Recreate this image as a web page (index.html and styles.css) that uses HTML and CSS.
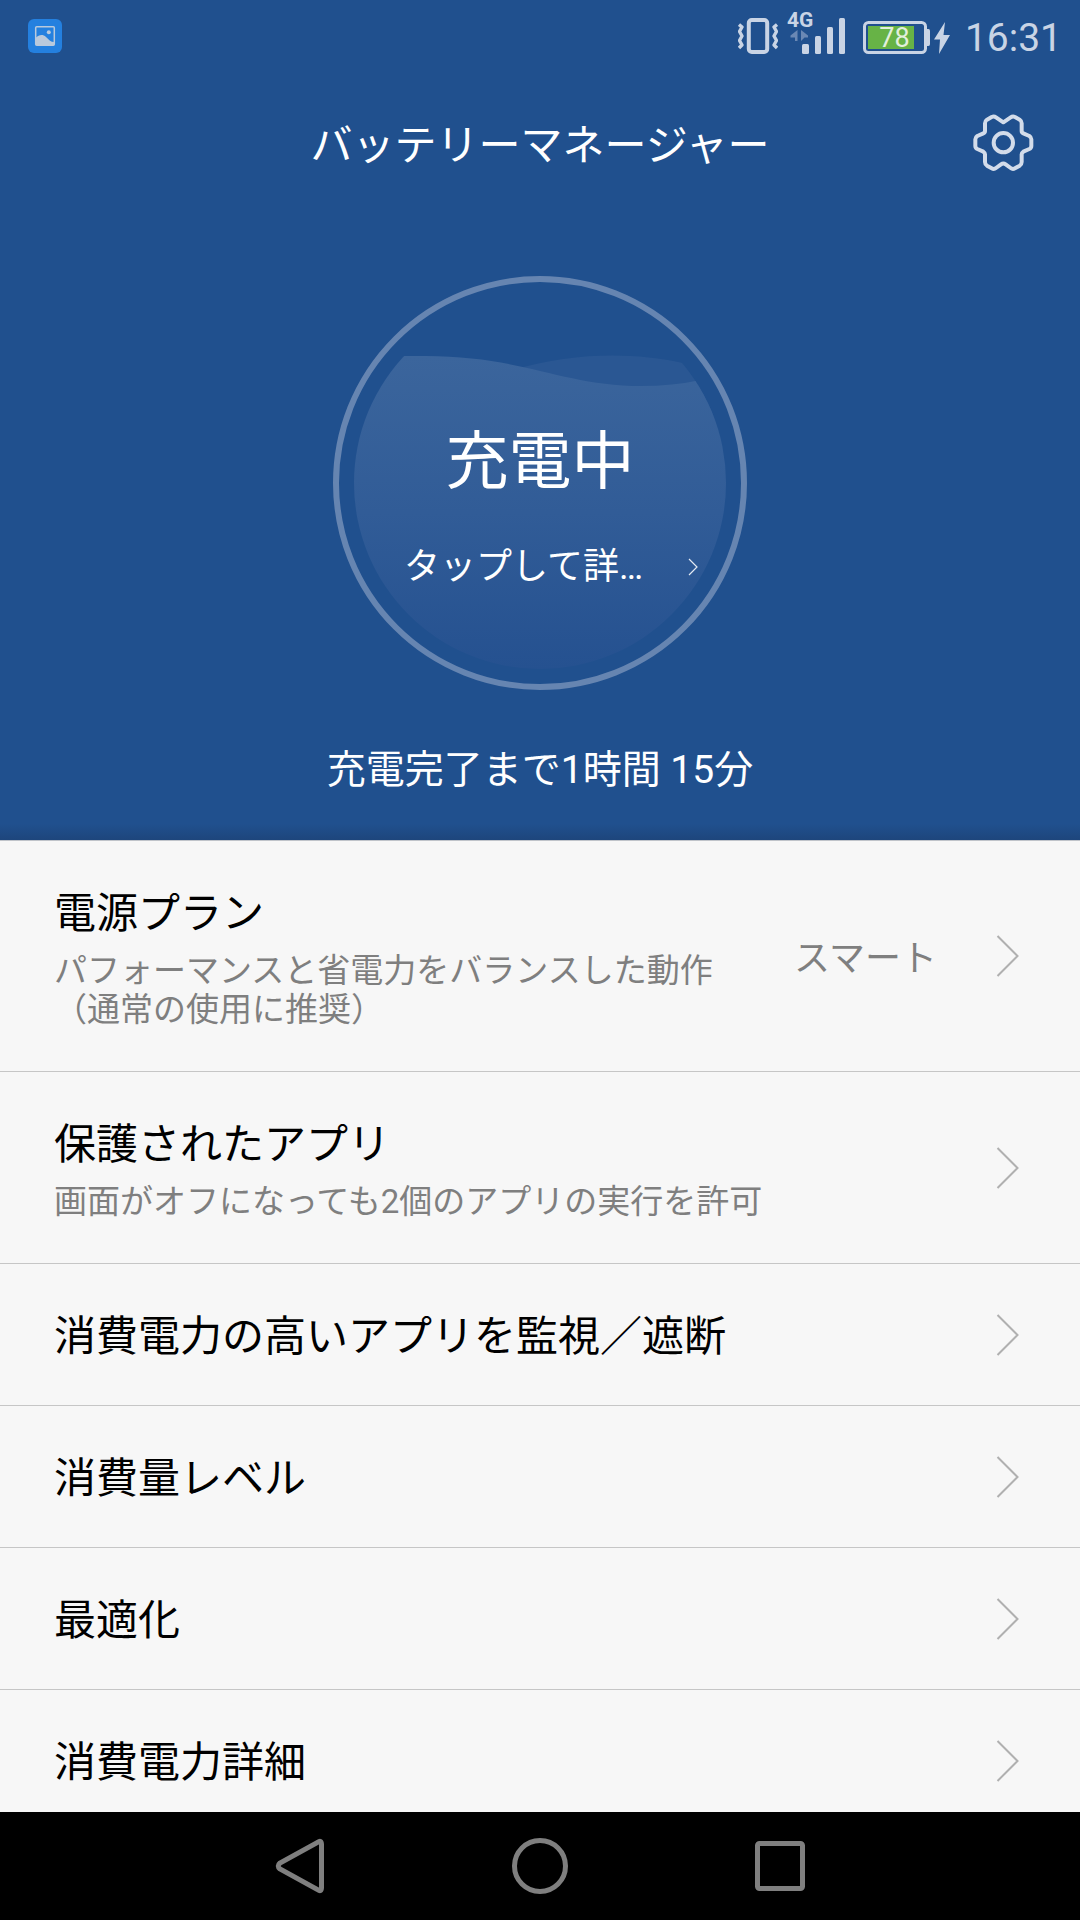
FILE: index.html
```html
<!DOCTYPE html>
<html lang="ja">
<head>
    <meta charset="UTF-8">
    <meta name="viewport" content="width=device-width, initial-scale=1.0">
    <title>バッテリーマネージャー</title>
    <link rel="stylesheet" href="styles.css">
</head>
<body>
    <div class="screen">
        <div class="hero">
            <div class="status-bar">
                <svg class="status-picture" width="34" height="34" viewBox="0 0 34 34">
                    <rect width="34" height="34" rx="6" fill="#2480df"/>
                    <rect x="7.7" y="7.7" width="18.6" height="18.6" rx="1" fill="none" stroke="#b9c9dc" stroke-width="1.5"/>
                    <circle cx="20.8" cy="13.3" r="2" fill="#b9c9dc"/>
                    <path d="M8 18.5C11 15.5 15 15 18 18C21 21 23 23 26 23V26H8Z" fill="#b9c9dc"/>
                </svg>
                <div class="status-icons">
                    <svg class="vibrate" width="40" height="36" viewBox="0 0 40 36">
                        <g fill="none" stroke="#c9d4e5">
                            <rect x="10.8" y="2" width="18.4" height="32" rx="3" stroke-width="4"/>
                            <path d="M1 6.5L4 9L1.5 13.5L4 18L1.5 22.5L4 27L1 30" stroke-width="3.4" stroke-linejoin="round"/>
                            <path d="M39 6.5L36 9L38.5 13.5L36 18L38.5 22.5L36 27L39 30" stroke-width="3.4" stroke-linejoin="round"/>
                        </g>
                    </svg>
                    <svg class="signal" width="58" height="54" viewBox="0 0 58 54">
                        <text x="0" y="27" class="network">4G</text>
                        <path d="M3.500 35.500L10.500 30V41H8V37.500H3.500ZM21 35.500L14 30V41L17.500 37.500H21Z" fill="#6a88b4"/>
                        <g fill="#c9d4e5">
                            <rect x="15" y="44" width="7" height="10" rx="1.5"/>
                            <rect x="28" y="36" width="6" height="18" rx="1.5"/>
                            <rect x="40" y="27" width="6" height="27" rx="1.5"/>
                            <rect x="52" y="18" width="6" height="36" rx="1.5"/>
                        </g>
                    </svg>
                    <svg class="battery" width="87" height="34" viewBox="0 0 87 34">
                        <rect x="1.5" y="1.5" width="61" height="30" rx="4" fill="none" stroke="#c9d4e5" stroke-width="3"/>
                        <path d="M64 8h1.5q1.5 0 1.5 2v13q0 2-1.5 2H64Z" fill="#c9d4e5"/>
                        <rect x="5" y="5" width="46" height="23" fill="#67b346"/>
                        <text x="31.5" y="25.7" class="percent">78</text>
                        <path d="M82 1L71 18.5H77L76 33L87 14H80.500Z" fill="#c9d4e5"/>
                    </svg>
                    <span class="clock">16:31</span>
                </div>
            </div>

            <div class="title-bar">
                <h1>バッテリーマネージャー</h1>
                <svg class="settings" width="61" height="58" viewBox="98 71 183 174">
                    <g fill="none" stroke="#d3dcea" stroke-width="12">
                        <path stroke-linejoin="round" d="M189 96L167 81Q161 77 154 80L140 88Q134 92 134 99V122Q134 127 129 129L111 137Q105 141 105 147V167Q105 173 111 176L129 184Q134 187 134 192V215Q134 222 140 226L154 234Q161 238 167 233L182 222Q189 217 196 222L211 233Q217 238 224 234L238 226Q244 222 244 215V192Q244 187 249 184L267 176Q273 173 273 167V147Q273 141 267 137L249 129Q244 127 244 122V99Q244 92 238 88L224 80Q217 77 211 81Z"/>
                        <circle cx="189" cy="157" r="29"/>
                    </g>
                </svg>
            </div>

            <div class="gauge">
                <svg class="gauge-art" width="414" height="414" viewBox="0 0 414 414">
                    <defs>
                        <linearGradient id="water" x1="0" y1="80" x2="0" y2="393" gradientUnits="userSpaceOnUse">
                            <stop offset="0" stop-color="#3b659c"/>
                            <stop offset="0.5" stop-color="#315c97"/>
                            <stop offset="1" stop-color="#255190"/>
                        </linearGradient>
                        <clipPath id="bowl">
                            <circle cx="207" cy="207" r="186"/>
                        </clipPath>
                    </defs>
                    <g clip-path="url(#bowl)">
                        <path d="M180 94C240 76 300 76 350 87L400 97V140H180Z" fill="#2a5793"/>
                        <path d="M0 80H92C190 80 230 110 308 110Q340 110 368 104L414 92V414H0Z" fill="url(#water)"/>
                    </g>
                    <circle cx="207" cy="207" r="204" fill="none" stroke="#6685b1" stroke-width="6"/>
                </svg>
                <div class="gauge-state">充電中</div>
                <div class="gauge-detail">
                    <span>タップして詳…</span>
                    <svg width="10" height="18" viewBox="0 0 10 18">
                        <path d="M1 1L9 9L1 17" fill="none" stroke="#e4eaf3" stroke-width="1.200"/>
                    </svg>
                </div>
            </div>

            <p class="remaining">充電完了まで1時間 15分</p>
        </div>

        <div class="list">
            <div class="row row-tall">
                <div class="row-text">
                    <h2>電源プラン</h2>
                    <p>パフォーマンスと省電力をバランスした動作<br>（通常の使用に推奨）</p>
                </div>
                <span class="row-value">スマート</span>
                <svg class="chevron" width="23" height="42" viewBox="0 0 23 42"><path d="M1.500 1L21.500 21L1.500 41"/></svg>
            </div>
            <div class="row row-medium">
                <div class="row-text">
                    <h2>保護されたアプリ</h2>
                    <p>画面がオフになっても2個のアプリの実行を許可</p>
                </div>
                <svg class="chevron" width="23" height="42" viewBox="0 0 23 42"><path d="M1.500 1L21.500 21L1.500 41"/></svg>
            </div>
            <div class="row">
                <div class="row-text"><h2>消費電力の高いアプリを監視／遮断</h2></div>
                <svg class="chevron" width="23" height="42" viewBox="0 0 23 42"><path d="M1.500 1L21.500 21L1.500 41"/></svg>
            </div>
            <div class="row">
                <div class="row-text"><h2>消費量レベル</h2></div>
                <svg class="chevron" width="23" height="42" viewBox="0 0 23 42"><path d="M1.500 1L21.500 21L1.500 41"/></svg>
            </div>
            <div class="row">
                <div class="row-text"><h2>最適化</h2></div>
                <svg class="chevron" width="23" height="42" viewBox="0 0 23 42"><path d="M1.500 1L21.500 21L1.500 41"/></svg>
            </div>
            <div class="row">
                <div class="row-text"><h2>消費電力詳細</h2></div>
                <svg class="chevron" width="23" height="42" viewBox="0 0 23 42"><path d="M1.500 1L21.500 21L1.500 41"/></svg>
            </div>
        </div>

        <div class="nav-bar">
            <svg width="60" height="60" viewBox="0 0 60 60">
                <path d="M51.500 8.500Q51.500 3.500 47.500 6.500L10 27Q6.500 30 10 33L47.500 53.500Q51.500 56.500 51.500 51.500Z"/>
            </svg>
            <svg width="60" height="60" viewBox="0 0 60 60">
                <circle cx="30" cy="30" r="25.500"/>
            </svg>
            <svg width="60" height="60" viewBox="0 0 60 60">
                <rect x="7.500" y="7.500" width="45" height="45" rx="2"/>
            </svg>
        </div>
    </div>
</body>
</html>
```

FILE: styles.css
```css
* {
    margin: 0;
    padding: 0;
    box-sizing: border-box;
}

body {
    font-family: Roboto, 'Noto Sans CJK JP', sans-serif;
    background: #000;
}

svg {
    display: block;
    flex-shrink: 0;
}

.screen {
    width: 1080px;
    height: 1920px;
    display: flex;
    flex-direction: column;
    overflow: hidden;
}

.hero {
    height: 841px;
    flex-shrink: 0;
    background: linear-gradient(to bottom, transparent 824px, rgba(25, 50, 90, 0.35) 840px), #20508e;
    border-bottom: 1px solid #c0c4ca;
    color: white;
}

/* Status bar */
.status-bar {
    height: 75px;
    display: flex;
    justify-content: space-between;
    padding: 0 18px 0 28px;
}

.status-picture {
    margin-top: 19px;
}

.status-icons {
    display: flex;
}

.vibrate {
    margin: 18px 9px 0 0;
}

.signal {
    margin-right: 18px;
}

.battery {
    margin: 21px 15px 0 0;
}

.network {
    font-size: 21px;
    font-weight: 700;
    fill: #c9d4e5;
}

.percent {
    font-size: 27px;
    text-anchor: middle;
    fill: #e3efdc;
}

.clock {
    font-size: 39px;
    line-height: 46px;
    margin-top: 15px;
    color: #c9d4e5;
}

/* Title */
.title-bar {
    height: 136px;
    display: grid;
    grid-template-columns: 61px 1fr 61px;
    align-items: center;
    padding: 0 46px;
}

.title-bar h1 {
    grid-column: 2;
    padding-top: 6px;
    font-size: 42px;
    font-weight: 400;
    line-height: 60px;
    text-align: center;
}

/* Charge gauge */
.gauge {
    position: relative;
    width: 414px;
    height: 414px;
    margin: 65px auto 0;
    padding-top: 141px;
}

.gauge-art {
    position: absolute;
    top: 0;
    left: 0;
}

.gauge-state {
    position: relative;
    font-size: 63px;
    line-height: 90px;
    text-align: center;
}

.gauge-detail {
    position: relative;
    display: flex;
    align-items: center;
    justify-content: space-between;
    margin-top: 34px;
    padding: 0 49px 0 71px;
    font-size: 36px;
    line-height: 52px;
}

.remaining {
    margin-top: 52px;
    font-size: 39px;
    line-height: 56px;
    text-align: center;
}

/* Settings list */
.list {
    flex: 1;
    overflow: hidden;
    background: #f7f7f7;
}

.row {
    height: 142px;
    display: flex;
    align-items: center;
    padding: 0 61px 0 54px;
    border-bottom: 1px solid #c6c6c6;
}

.row-tall {
    height: 231px;
}

.row-medium {
    height: 192px;
}

.row-text {
    flex: 1;
    padding-top: 5px;
}

.row h2 {
    font-size: 42px;
    font-weight: 400;
    line-height: 50px;
    color: #000;
}

.row p {
    margin-top: 12px;
    font-size: 33px;
    line-height: 39px;
    color: #7f7f7f;
}

.row-value {
    padding-top: 5px;
    margin-right: 59px;
    font-size: 36px;
    line-height: 50px;
    color: #7f7f7f;
}

.chevron path {
    fill: none;
    stroke: #b0b0b0;
    stroke-width: 2;
}

/* Navigation bar */
.nav-bar {
    height: 108px;
    flex-shrink: 0;
    display: flex;
    align-items: center;
    justify-content: center;
    gap: 180px;
    background: #000;
}

.nav-bar svg {
    fill: none;
    stroke: #7f7f7f;
    stroke-width: 5;
}
```
